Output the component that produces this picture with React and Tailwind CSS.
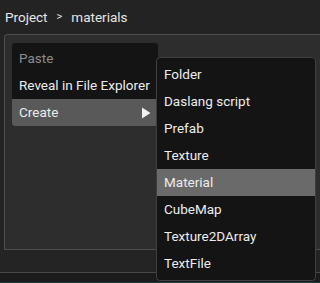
import React from "react";

const font = { fontFamily: "Roboto, 'Liberation Sans', sans-serif" };

function Item({ label, disabled, active, activeBg, arrow }) {
  return (
    <div
      className={`flex h-[27px] items-center justify-between whitespace-nowrap pl-[7px] pr-[7px] text-[13.5px] ${
        active ? activeBg : ""
      } ${disabled ? "text-[#8c8c8c]" : "text-[#ececec]"}`}
    >
      <span>{label}</span>
      {arrow && (
        <svg width="10" height="12" viewBox="0 0 10 12">
          <path d="M1 0.5 L9.5 6 L1 11.5 Z" fill="#f2f2f2" />
        </svg>
      )}
    </div>
  );
}

export default function App() {
  const sub = ["Folder", "Daslang script", "Prefab", "Texture", "Material", "CubeMap", "Texture2DArray", "TextFile"];
  return (
    <div className="relative flex h-[283px] w-[320px] flex-col overflow-hidden bg-[#232323]" style={font}>
      <div className="flex h-[34px] items-center pl-[5px] text-[13.5px] text-[#e6e6e6]">
        <span>Project</span>
        <span className="mx-[9px] text-[11px]">&gt;</span>
        <span>materials</span>
      </div>
      <div className="ml-[4px] h-[216px] rounded-tl-[4px] border-l border-t border-b border-[#4e4e4e] bg-[#2d2d2d]" />
      <div className="h-[23px] border-b border-[#484848] bg-[#242424]" />
      <div className="flex-1 bg-[#1b1b1b]" />
      <div className="h-px bg-[#1f3a3a]" />

      <div className="absolute left-[11px] top-[42px] w-[148px] overflow-hidden rounded-[4px] border border-[#2c2c2c] bg-[#141414] pt-[2px]">
        <Item label="Paste" disabled />
        <Item label="Reveal in File Explorer" />
        <Item label="Create" active activeBg="bg-[#595959]" arrow />
      </div>

      <div className="absolute left-[156px] top-[57px] w-[160px] overflow-hidden rounded-[4px] border border-[#3e3e3e] bg-[#141414] py-[3px]">
        {sub.map((s) => (
          <Item key={s} label={s} active={s === "Material"} activeBg="bg-[#6a6a6a]" />
        ))}
      </div>
    </div>
  );
}
